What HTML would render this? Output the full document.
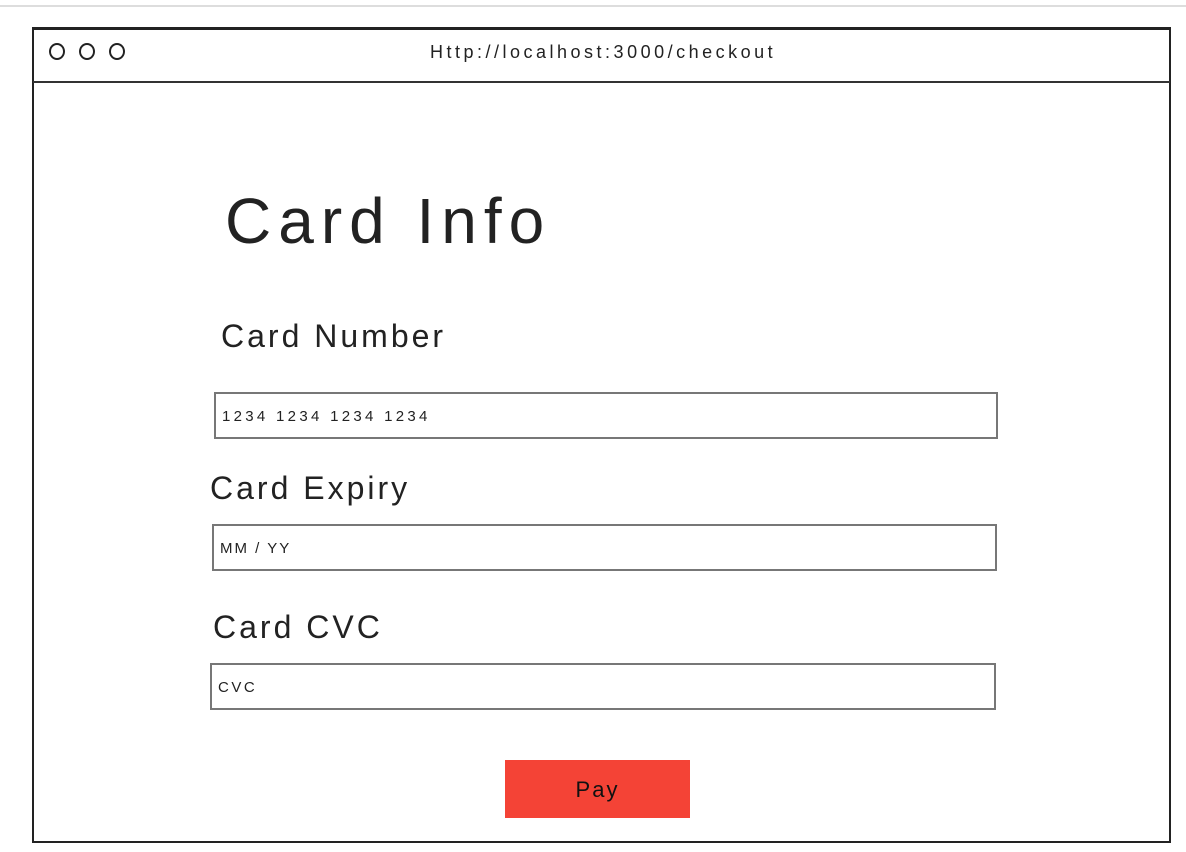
<!DOCTYPE html>
<html><head><style>
body{margin:0;width:1186px;height:852px;background:#fff;position:relative;overflow:hidden;font-family:"Liberation Sans",sans-serif;color:#222}
.a{position:absolute}
.inp{position:absolute;border:2px solid #777;box-sizing:border-box;height:47px;font-size:15px;padding-left:6px;line-height:45px;color:#222}
.lab{position:absolute;font-size:32px;color:#222;letter-spacing:3px}
.c{position:absolute;top:43px;width:16px;height:17px;border:2px solid #222;border-radius:50%;box-sizing:border-box}
</style></head><body>
<div class="a" style="left:0;top:5px;width:1186px;height:2px;background:#ddd"></div>
<div class="a" style="left:32px;top:27px;width:1139px;height:816px;border:2px solid #222;border-top-width:3px;box-sizing:border-box"></div>
<div class="a" style="left:33px;top:81px;width:1137px;height:2px;background:#333"></div>
<div class="c" style="left:49px"></div>
<div class="c" style="left:79px"></div>
<div class="c" style="left:109px"></div>
<div class="a" style="left:430px;top:42px;font-size:18px;letter-spacing:3.5px">Http://localhost:3000/checkout</div>
<div class="a" style="left:225px;top:184px;font-size:64px;letter-spacing:7px">Card Info</div>
<div class="lab" style="left:221px;top:318px">Card Number</div>
<div class="inp" style="left:214px;top:392px;width:784px;letter-spacing:3.3px">1234 1234 1234 1234</div>
<div class="lab" style="left:210px;top:470px">Card Expiry</div>
<div class="inp" style="left:212px;top:524px;width:785px;letter-spacing:2px">MM / YY</div>
<div class="lab" style="left:213px;top:609px">Card CVC</div>
<div class="inp" style="left:210px;top:663px;width:786px;letter-spacing:2.5px">CVC</div>
<div class="a" style="left:505px;top:760px;width:185px;height:58px;background:#f44336;text-align:center;line-height:60px;font-size:22px;color:#111;letter-spacing:2px">Pay</div>
</body></html>
